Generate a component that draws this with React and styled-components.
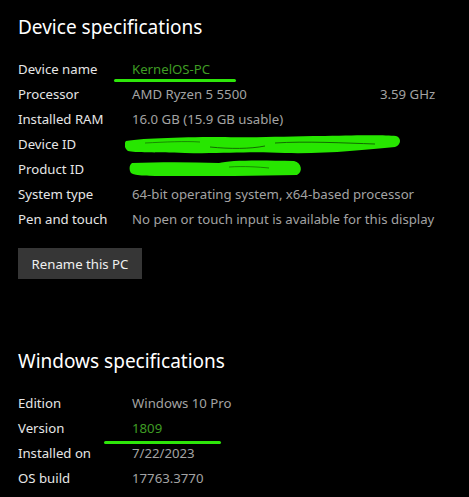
import React from 'react';
import styled, { createGlobalStyle } from 'styled-components';

const GlobalStyle = createGlobalStyle`
	html, body {
		margin: 0;
		padding: 0;
		background: #000;
	}
	body {
		font-family: 'Noto Sans', 'Open Sans', sans-serif;
		color: #fff;
	}
`;

const PageStyled = styled.div`
	width: 469px;
	height: 497px;
	overflow: hidden;
	padding: 12px 0 0 18px;
	box-sizing: border-box;
	background: #000;
`;
const SectionStyled = styled.section`
	display: flex;
	flex-direction: column;
	margin-bottom: ${(p) => p.$gap || 0}px;
`;
const HeadingStyled = styled.h2`
	margin: 0 0 14px;
	font-size: 19px;
	font-weight: 400;
	line-height: 30px;
	color: #fff;
`;
const SpecGrid = styled.div`
	display: grid;
	grid-template-columns: 114px 248px auto;
	grid-auto-rows: 25px;
	align-items: center;
	font-size: 13.2px;
	line-height: 18px;
`;
const LabelStyled = styled.div`
	color: #e6e6e6;
`;
const ValueStyled = styled.div`
	position: relative;
	height: 18px;
	grid-column: ${(p) => (p.$wide ? 'span 2' : 'auto')};
	color: ${(p) => (p.$marked ? '#3f9c24' : '#a3a3a3')};
	white-space: nowrap;
`;
const ExtraStyled = styled.div`
	color: #a3a3a3;
`;
const Underline = styled.span`
	position: absolute;
	left: ${(p) => p.$left}px;
	top: ${(p) => p.$top}px;
	width: ${(p) => p.$width}px;
	height: 3px;
	border-radius: 2px;
	background: #2ee60a;
`;
const Scribble = styled.svg`
	position: absolute;
	left: ${(p) => p.$left}px;
	top: ${(p) => p.$top}px;
`;
const ButtonStyled = styled.button`
	align-self: flex-start;
	margin-top: 17px;
	width: 124px;
	height: 31px;
	padding: 0;
	border: none;
	border-radius: 0;
	background: #363636;
	color: #f0f0f0;
	font-family: inherit;
	font-size: 13.2px;
	cursor: pointer;
`;

const deviceSpecs = [
	{ label: 'Device name', value: 'KernelOS-PC', marked: true, line: { left: -18, top: 19, width: 122 } },
	{ label: 'Processor', value: 'AMD Ryzen 5 5500', extra: '3.59 GHz' },
	{ label: 'Installed RAM', value: '16.0 GB (15.9 GB usable)' },
	{ label: 'Device ID', value: '', scribble: 'device' },
	{ label: 'Product ID', value: '', scribble: 'product' },
	{ label: 'System type', value: '64-bit operating system, x64-based processor' },
	{ label: 'Pen and touch', value: 'No pen or touch input is available for this display' },
];

const windowsSpecs = [
	{ label: 'Edition', value: 'Windows 10 Pro' },
	{ label: 'Version', value: '1809', marked: true, line: { left: -28, top: 22, width: 117 } },
	{ label: 'Installed on', value: '7/22/2023' },
	{ label: 'OS build', value: '17763.3770' },
];

// marker scribbles hiding the IDs
const DeviceScribble = () => (
	<Scribble $left={-7} $top={0} width="276" height="20" viewBox="0 0 276 20">
		<path
			d="M1 6 C20 3 60 2 100 2 C140 3 160 1 200 1 C240 0 260 0 271 1 C277 3 276 10 270 12 C240 15 200 19 160 18 C120 16 100 19 60 18 C30 17 10 18 3 16 C-1 13 -1 8 1 6 Z"
			fill="#27e600"
		/>
		<path d="M85 12 C105 14 125 14 140 11" stroke="#0d4a00" strokeWidth="0.8" fill="none" />
		<path d="M150 8 C180 6 220 8 250 9" stroke="#0d4a00" strokeWidth="0.8" fill="none" />
		<path d="M20 8 C40 7 60 6 75 7" stroke="#0d4a00" strokeWidth="0.6" fill="none" />
	</Scribble>
);

const ProductScribble = () => (
	<Scribble $left={-3} $top={0} width="175" height="17" viewBox="0 0 175 17">
		<path
			d="M3 3 C30 2 60 2 90 3 C100 0 130 0 165 1 C173 3 174 12 168 15 C130 16 80 16 40 16 C20 16 6 16 2 13 C0 10 0 5 3 3 Z"
			fill="#27e600"
		/>
		<path d="M100 7 C115 6 130 7 140 8" stroke="#0d4a00" strokeWidth="0.6" fill="none" />
	</Scribble>
);

const SpecRows = ({ items }) =>
	items.map((item) => (
		<React.Fragment key={item.label}>
			<LabelStyled>{item.label}</LabelStyled>
			<ValueStyled $wide={!item.extra} $marked={item.marked}>
				{item.value || '\u00a0'}
				{item.line && <Underline $left={item.line.left} $top={item.line.top} $width={item.line.width} />}
				{item.scribble === 'device' && <DeviceScribble />}
				{item.scribble === 'product' && <ProductScribble />}
			</ValueStyled>
			{item.extra && <ExtraStyled>{item.extra}</ExtraStyled>}
		</React.Fragment>
	));

const App = () => {
	return (
		<PageStyled>
			<GlobalStyle />
			<SectionStyled $gap={67}>
				<HeadingStyled>Device specifications</HeadingStyled>
				<SpecGrid>
					<SpecRows items={deviceSpecs} />
				</SpecGrid>
				<ButtonStyled>Rename this PC</ButtonStyled>
			</SectionStyled>
			<SectionStyled>
				<HeadingStyled>Windows specifications</HeadingStyled>
				<SpecGrid>
					<SpecRows items={windowsSpecs} />
				</SpecGrid>
			</SectionStyled>
		</PageStyled>
	);
};

export default App;
